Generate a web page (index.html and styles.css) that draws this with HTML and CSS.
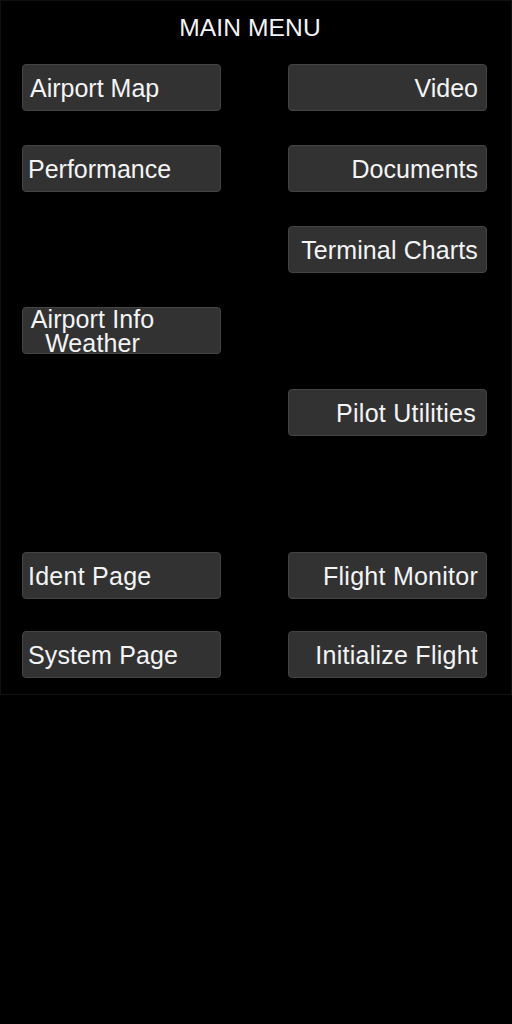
FILE: index.html
```html
<!DOCTYPE html>
<html>
<head>
<meta charset="utf-8">
<link rel="stylesheet" href="styles.css">
</head>
<body>
<div class="panel">
  <h1 class="title">MAIN MENU</h1>
  <div class="grid top">
    <div class="btn left pad-a">Airport Map</div>
    <div class="btn right">Video</div>
    <div class="btn left">Performance</div>
    <div class="btn right">Documents</div>
    <div class="slot"></div>
    <div class="btn right wide-s">Terminal Charts</div>
    <div class="btn left two-line"><span class="line">Airport Info</span><span class="line">Weather</span></div>
    <div class="slot"></div>
    <div class="slot"></div>
    <div class="btn right pad-b wide">Pilot Utilities</div>
    <div class="slot"></div>
    <div class="slot"></div>
  </div>
  <div class="grid bottom">
    <div class="btn left wide">Ident Page</div>
    <div class="btn right wide">Flight Monitor</div>
    <div class="btn left pad-s wide-s">System Page</div>
    <div class="btn right wide">Initialize Flight</div>
  </div>
</div>
</body>
</html>
```

FILE: styles.css
```css
html, body {
  margin: 0;
  padding: 0;
  background: #000;
}
body {
  width: 512px;
  height: 1024px;
  font-family: "Liberation Sans", Arial, sans-serif;
  color: #f4f4f4;
}
.panel {
  box-sizing: border-box;
  width: 512px;
  height: 695px;
  border: 1px solid #101010;
  padding: 0 24px 0 21px;
}
.title {
  margin: 0 9px 0 0;
  height: 63px;
  padding-top: 13px;
  box-sizing: border-box;
  text-align: center;
  font-weight: normal;
  font-size: 24.6px;
  line-height: 28px;
  letter-spacing: 0.1px;
}
.grid {
  display: grid;
  grid-template-columns: 199px 199px;
  column-gap: 67px;
}
.top {
  grid-template-rows: repeat(6, 47px);
  row-gap: 34px;
}
.top .pad-b {
  margin-top: 1px;
}
.bottom {
  margin-top: 36px;
  grid-template-rows: repeat(2, 47px);
  row-gap: 32px;
}
.btn {
  box-sizing: border-box;
  height: 47px;
  background: #323232;
  border: 1px solid #444;
  border-radius: 4px;
  font-size: 25px;
  line-height: 28px;
  display: flex;
  align-items: center;
  white-space: nowrap;
}
.wide {
  letter-spacing: 0.25px;
}
.wide-s {
  letter-spacing: 0.12px;
}
.left {
  padding-left: 5px;
}
.left.pad-a {
  padding-left: 7px;
}
.left.pad-s {
  padding-left: 5px;
}
.right {
  justify-content: flex-end;
  padding-right: 8px;
}
.right.pad-b {
  padding-right: 10px;
}
.two-line {
  flex-direction: column;
  justify-content: center;
  align-items: center;
  padding: 0 58px 0 0;
  letter-spacing: 0.1px;
}
.line {
  display: block;
  height: 24px;
  line-height: 24px;
}
```
